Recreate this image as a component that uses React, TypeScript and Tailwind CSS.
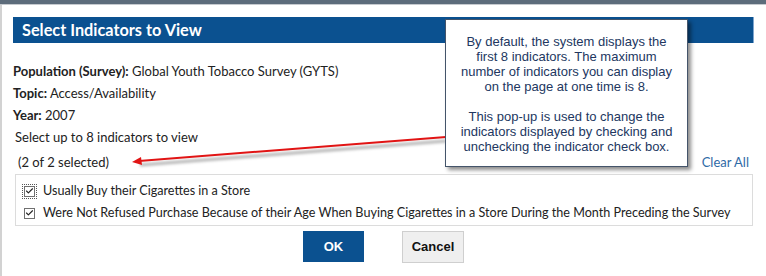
import { Check } from "lucide-react";

const indicators = [
  "Usually Buy their Cigarettes in a Store",
  "Were Not Refused Purchase Because of their Age When Buying Cigarettes in a Store During the Month Preceding the Survey",
];

function CheckBox({ focused }: { focused?: boolean }) {
  return (
    <span
      className={`relative flex h-[11px] w-[11px] shrink-0 items-center justify-center border border-[#707070] bg-white ${
        focused ? "outline outline-1 outline-dotted outline-offset-1 outline-[#555]" : ""
      }`}
    >
      <Check className="h-[10px] w-[10px] text-[#222]" strokeWidth={3} />
    </span>
  );
}

export default function App() {
  return (
    <div className="relative h-[276px] w-[766px] overflow-hidden bg-white font-['Lato','Noto_Sans',sans-serif] text-[13px] text-[#222]">
      <div className="h-[4px] bg-[#5d6c7b]" />
      <div className="h-[1px] bg-[#c6cacf]" />

      <div className="flex h-[271px] border-l-2 border-[#d2d2d2]">
        <div className="flex w-full flex-col pl-[11px] pr-[12px] pt-[12px]">
          <div className="flex h-[26px] items-center border-r border-[#7fa6cf] bg-[#0b5190] pl-[9px] text-[16.3px] font-bold text-white">
            Select Indicators to View
          </div>

          <div className="mt-[17px] leading-[22px]">
            <p>
              <span className="font-bold">Population (Survey):</span> Global Youth Tobacco Survey (GYTS)
            </p>
            <p>
              <span className="font-bold">Topic:</span> Access/Availability
            </p>
            <p>
              <span className="font-bold">Year:</span> 2007
            </p>
            <p className="pl-[2px]">Select up to 8 indicators to view</p>
          </div>

          <div className="mt-[3px] flex items-center justify-between pl-[5px] pr-[5px] leading-[22px]">
            <span>(2 of 2 selected)</span>
            <span className="text-[#2f6aa6]">Clear All</span>
          </div>

          <div className="ml-[2px] mr-[1px] mt-[1px] border border-[#dcdcdc] pb-[1px] pl-[8px] pt-[5px] text-[12.6px] leading-[22px]">
            {indicators.map((label, i) => (
              <div key={label} className="flex items-center gap-[8px] whitespace-nowrap">
                <CheckBox focused={i === 0} />
                <span>{label}</span>
              </div>
            ))}
          </div>

          <div className="mt-[5px] flex justify-center gap-[38px] font-['Liberation_Sans',Arial,sans-serif] text-[13px] font-bold">
            <button className="h-[31px] w-[61px] bg-[#0b5190] text-white">OK</button>
            <button className="h-[32px] w-[62px] border border-[#cfcfcf] bg-[#efefef] text-[#111]">
              Cancel
            </button>
          </div>
        </div>
      </div>

      <svg className="pointer-events-none absolute left-0 top-0" width="766" height="276">
        <defs>
          <filter id="blur" x="-10%" y="-50%" width="120%" height="200%">
            <feGaussianBlur stdDeviation="1.5" />
          </filter>
        </defs>
        <line x1="140" y1="165" x2="446" y2="141" stroke="#000" strokeOpacity="0.35" strokeWidth="2.5" filter="url(#blur)" />
        <line x1="139" y1="161" x2="446" y2="137" stroke="#e11414" strokeWidth="2" />
        <polygon points="132,162 141,157 142,165" fill="#e11414" />
      </svg>

      <div className="absolute left-[445px] top-[19px] h-[148px] w-[243px] border border-[#44546a] bg-white px-[14px] pt-[14px] text-center font-['Liberation_Sans',Arial,sans-serif] text-[13px] leading-[15px] text-[#22375f] shadow-[3px_3px_4px_rgba(0,0,0,0.45)]">
        <p>
          By default, the system displays the first 8 indicators. The maximum number of indicators you can display on the page at one time is 8.
        </p>
        <p className="mt-[15px]">
          This pop-up is used to change the indicators displayed by checking and unchecking the indicator check box.
        </p>
      </div>
    </div>
  );
}
